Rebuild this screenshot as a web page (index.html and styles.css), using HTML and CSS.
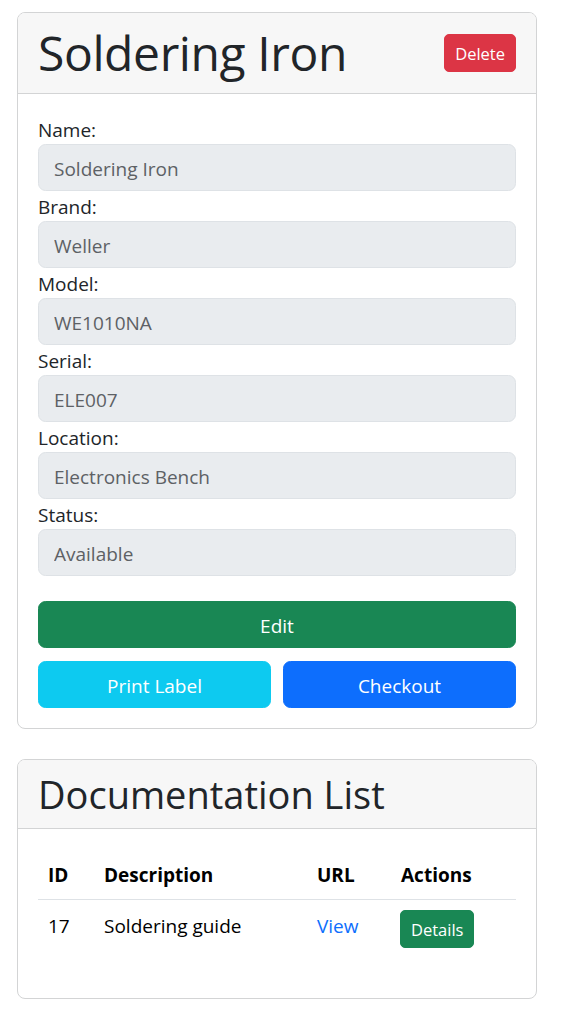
FILE: index.html
```html
<!DOCTYPE html>
<html lang="en">
<head>
<meta charset="utf-8">
<title>Soldering Iron</title>
<link rel="stylesheet" href="styles.css">
</head>
<body>
<main class="page">
  <section class="card">
    <header class="card-header split">
      <h1 class="title">Soldering Iron</h1>
      <button class="btn btn-sm btn-danger">Delete</button>
    </header>
    <div class="card-body">
      <form class="item-form">
        <label class="field-label">Name:</label>
        <input class="field-input" value="Soldering Iron" disabled>
        <label class="field-label">Brand:</label>
        <input class="field-input" value="Weller" disabled>
        <label class="field-label">Model:</label>
        <input class="field-input" value="WE1010NA" disabled>
        <label class="field-label">Serial:</label>
        <input class="field-input" value="ELE007" disabled>
        <label class="field-label">Location:</label>
        <input class="field-input" value="Electronics Bench" disabled>
        <label class="field-label">Status:</label>
        <input class="field-input" value="Available" disabled>
      </form>
      <button class="btn btn-success btn-block edit-btn">Edit</button>
      <div class="btn-pair">
        <button class="btn btn-info">Print Label</button>
        <button class="btn btn-primary">Checkout</button>
      </div>
    </div>
  </section>

  <section class="card card-docs">
    <header class="card-header">
      <h2 class="subtitle">Documentation List</h2>
    </header>
    <div class="card-body">
      <table class="doc-table">
        <colgroup>
          <col class="col-id">
          <col class="col-desc">
          <col class="col-url">
          <col class="col-actions">
        </colgroup>
        <thead>
          <tr>
            <th>ID</th>
            <th>Description</th>
            <th>URL</th>
            <th>Actions</th>
          </tr>
        </thead>
        <tbody>
          <tr>
            <td>17</td>
            <td>Soldering guide</td>
            <td><a class="link" href="#">View</a></td>
            <td><button class="btn btn-sm btn-success">Details</button></td>
          </tr>
        </tbody>
      </table>
    </div>
  </section>
</main>
</body>
</html>
```

FILE: styles.css
```css
* {
  box-sizing: border-box;
}

html, body {
  margin: 0;
  padding: 0;
  background: #ffffff;
}

body {
  font-family: "Open Sans", "Noto Sans", sans-serif;
  font-size: 20px;
  line-height: 30px;
  color: #212529;
}

.page {
  padding: 12px 26px 20px 17px;
  display: flex;
  flex-direction: column;
  gap: 30px;
}

.card {
  width: 520px;
  border: 1px solid #d3d4d5;
  border-radius: 8px;
  background: #ffffff;
  overflow: hidden;
}

.card-header {
  background: #f7f7f7;
  border-bottom: 1px solid #d3d4d5;
  padding: 10px 20px;
}

.split {
  display: flex;
  align-items: center;
  justify-content: space-between;
}

.title {
  margin: 0;
  font-weight: 400;
  font-size: 48px;
  line-height: 60px;
  letter-spacing: -0.4px;
  color: #212529;
}

.subtitle {
  margin: 0;
  font-weight: 400;
  font-size: 38px;
  line-height: 48px;
  color: #212529;
}

.card-body {
  padding: 20px;
}

.item-form {
  display: flex;
  flex-direction: column;
}

.field-label {
  display: block;
  font-size: 19px;
  line-height: 30px;
  height: 30px;
  padding-top: 1px;
  color: #212529;
}

.field-input {
  display: block;
  width: 100%;
  height: 47px;
  padding: 8px 15px 6px;
  font-family: inherit;
  font-size: 19px;
  line-height: 30px;
  color: #5d6165;
  background: #e9ecef;
  border: 1px solid #dee2e6;
  border-radius: 7.5px;
  -webkit-text-fill-color: #5d6165;
  opacity: 1;
}

.btn {
  font-family: inherit;
  font-size: 19px;
  line-height: 30px;
  height: 47px;
  padding: 8px 15px 6px;
  border: 1px solid transparent;
  border-radius: 7.5px;
  color: #ffffff;
  cursor: pointer;
  text-align: center;
}

.btn-sm {
  font-size: 16.5px;
  line-height: 26px;
  height: 38px;
  padding: 6px 10px 4px;
  border-radius: 5px;
}

.btn-danger {
  background: #dc3545;
  border-color: #dc3545;
}

.btn-success {
  background: #198754;
  border-color: #198754;
}

.btn-info {
  background: #0dcaf0;
  border-color: #0dcaf0;
}

.btn-primary {
  background: #0d6efd;
  border-color: #0d6efd;
}

.btn-block {
  display: block;
  width: 100%;
}

.edit-btn {
  margin-top: 25px;
}

.btn-pair {
  margin-top: 13px;
  display: grid;
  grid-template-columns: 1fr 1fr;
  gap: 12px;
}

.doc-table {
  width: 100%;
  border-collapse: collapse;
  table-layout: fixed;
  margin-bottom: 20px;
  color: #000000;
  vertical-align: top;
}

.col-id { width: 56px; }
.col-desc { width: 213px; }
.col-url { width: 84px; }
.col-actions { width: 125px; }

.doc-table th,
.doc-table td {
  padding: 11px 10px 9px;
  text-align: left;
  vertical-align: top;
  font-size: 19px;
  line-height: 30px;
}

.doc-table td:last-child {
  padding-top: 10px;
  padding-bottom: 10px;
}

.doc-table th {
  font-weight: 700;
  border-bottom: 1px solid #dee2e6;
}

.doc-table td .btn {
  display: block;
  margin-left: -1px;
}

.link {
  color: #0d6efd;
  text-decoration: none;
}
```
